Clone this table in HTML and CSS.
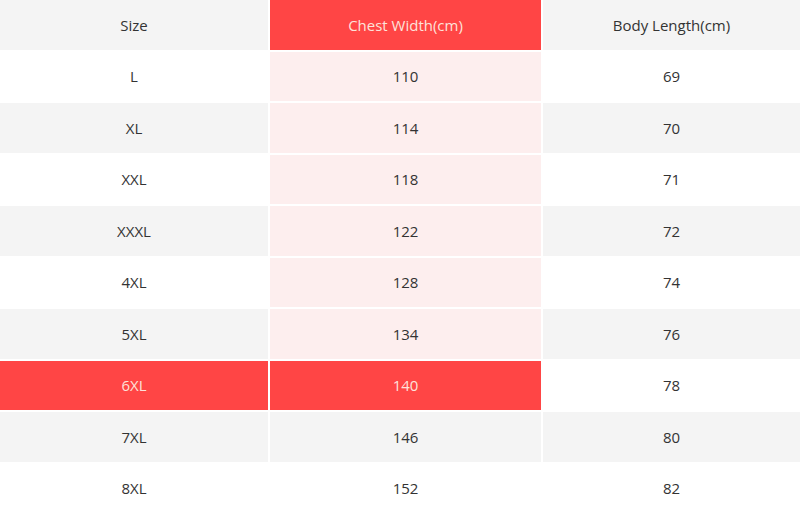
FILE: index.html
```html
<!DOCTYPE html>
<html>
<head>
<meta charset="utf-8">
<link rel="stylesheet" href="styles.css">
</head>
<body>
<div class="table">
  <div class="cell head">Size</div>
  <div class="cell head hl">Chest Width(cm)</div>
  <div class="cell head">Body Length(cm)</div>

  <div class="cell">L</div><div class="cell col">110</div><div class="cell">69</div>
  <div class="cell alt">XL</div><div class="cell col">114</div><div class="cell alt">70</div>
  <div class="cell">XXL</div><div class="cell col">118</div><div class="cell">71</div>
  <div class="cell alt">XXXL</div><div class="cell col">122</div><div class="cell alt">72</div>
  <div class="cell">4XL</div><div class="cell col">128</div><div class="cell">74</div>
  <div class="cell alt">5XL</div><div class="cell col">134</div><div class="cell alt">76</div>
  <div class="cell hl">6XL</div><div class="cell hl">140</div><div class="cell">78</div>
  <div class="cell alt">7XL</div><div class="cell alt">146</div><div class="cell alt">80</div>
  <div class="cell">8XL</div><div class="cell">152</div><div class="cell">82</div>
</div>
</body>
</html>
```
FILE: styles.css
```css
html, body {
  margin: 0;
  padding: 0;
  background: #ffffff;
}
body {
  font-family: "Open Sans", "Liberation Sans", sans-serif;
  font-size: 15px;
  color: #333333;
  overflow: hidden;
}
.table {
  display: grid;
  grid-template-columns: 268px 271px 1fr;
  grid-auto-rows: 49.5px;
  gap: 2px;
  width: 800px;
}
.cell {
  display: flex;
  align-items: center;
  justify-content: center;
  background: #ffffff;
}
.cell.head, .cell.alt {
  background: #f4f4f4;
}
.cell.col {
  background: #fdeeee;
}
.cell.hl {
  background: #ff4545;
  color: #fde2da;
}
```
